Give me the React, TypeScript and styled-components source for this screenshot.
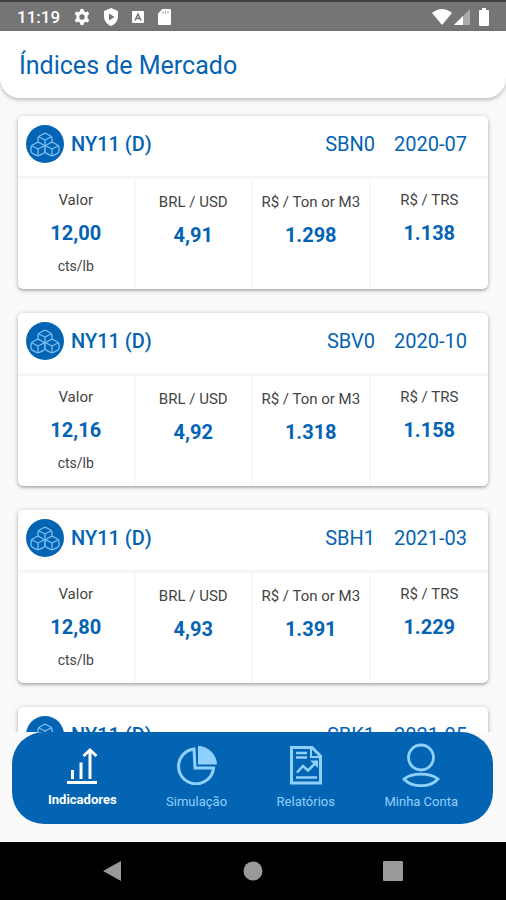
import React from "react";
import styled, { createGlobalStyle } from "styled-components";

const BLUE = "#0464b4";
const LIGHT = "#90d0fc";

const GlobalStyle = createGlobalStyle`
  * { box-sizing: border-box; }
  body { margin: 0; background: #fafafa; font-family: Roboto, "Liberation Sans", sans-serif; }
  button { font: inherit; border: 0; padding: 0; background: none; cursor: pointer; }
  h1, h2, p, dl, dt, dd { margin: 0; font-weight: 400; }
`;

const Screen = styled.div`
  height: 100vh;
  display: flex;
  flex-direction: column;
  background: #fafafa;
`;

const StatusBar = styled.div`
  flex: none;
  height: 31px;
  padding: 0 15px 0 17px;
  border-top: 2px solid #404040;
  background: #757575;
  color: #fff;
  display: flex;
  align-items: center;
  justify-content: space-between;
`;

const StatusGroup = styled.div<{ $gap: number }>`
  display: flex;
  align-items: center;
  gap: ${(p) => p.$gap}px;
  svg { display: block; }
`;

const Clock = styled.span`
  font-size: 17px;
  line-height: 20px;
  font-weight: 500;
`;

const Header = styled.header`
  flex: none;
  position: relative;
  height: 67px;
  padding: 0 19px;
  display: flex;
  align-items: center;
  background: #fff;
  border-radius: 0 0 20px 20px;
  box-shadow: 0 2px 4px rgba(0, 0, 0, 0.25);
`;

const Title = styled.h1`
  padding-top: 3px;
  font-size: 25px;
  line-height: 32px;
  color: ${BLUE};
`;

const List = styled.main`
  flex: 1;
  min-height: 0;
  overflow: hidden;
  padding: 18px 18px 0;
  display: flex;
  flex-direction: column;
  gap: 24px;
`;

const Card = styled.article`
  flex: none;
  background: #fff;
  border-radius: 5px;
  box-shadow: 0 1px 5px rgba(0, 0, 0, 0.28), 0 2px 2px rgba(0, 0, 0, 0.12);
`;

const CardHeader = styled.div`
  height: 63px;
  padding: 0 21px 5px 8px;
  display: flex;
  align-items: center;
  border-bottom: 3px solid #f6f6f6;
  color: ${BLUE};
  font-size: 20px;
  line-height: 24px;
  svg { display: block; margin-right: 7px; }
`;

const CardTitle = styled.h2`
  flex: 1;
  font-size: 20px;
  font-weight: 500;
`;

const Period = styled.span`
  margin-left: 19px;
`;

const Metrics = styled.dl`
  display: grid;
  grid-template-columns: repeat(4, 1fr);
  height: 110px;
`;

const Metric = styled.div<{ $inner: boolean }>`
  padding-top: ${(p) => (p.$inner ? 14 : 12)}px;
  text-align: center;
  border-right: 2px solid #f8f8f8;
  &:last-child { border-right: 0; }
`;

const MetricLabel = styled.dt`
  font-size: 15px;
  line-height: 18px;
  color: #444;
  white-space: nowrap;
`;

const MetricValue = styled.dd`
  margin-top: 12px;
  font-size: 20px;
  line-height: 24px;
  font-weight: 700;
  color: ${BLUE};
`;

const MetricUnit = styled.dd`
  margin-top: 12px;
  font-size: 14px;
  line-height: 18px;
  color: #444;
`;

const TabArea = styled.div`
  flex: none;
  padding: 0 13px 18px 12px;
`;

const TabBar = styled.nav`
  height: 92px;
  padding: 12px 35px 0 36px;
  border-radius: 32px;
  background: ${BLUE};
  display: flex;
  justify-content: space-between;
  align-items: flex-start;
`;

const Tab = styled.button<{ $active: boolean }>`
  display: flex;
  flex-direction: column;
  align-items: center;
  gap: ${(p) => (p.$active ? 5 : 7)}px;
  color: ${(p) => (p.$active ? "#fff" : LIGHT)};
  font-size: 13px;
  line-height: 18px;
  font-weight: ${(p) => (p.$active ? 700 : 400)};
  svg { display: block; }
`;

const SystemBar = styled.div`
  flex: none;
  height: 58px;
  background: #000;
  display: flex;
  align-items: center;
  justify-content: center;
  gap: 116px;
`;

const SystemButton = styled.button`
  width: 24px;
  height: 24px;
  svg { display: block; }
`;

const SugarIcon = () => (
  <svg width="38" height="38" viewBox="0 0 38 38" fill="none" stroke="#7cc0f4" strokeWidth="1.3" strokeLinejoin="round">
    <circle cx="19" cy="19" r="19" fill={BLUE} stroke="none" />
    {[[19, 15], [12, 24], [26, 24]].map(([x, y]) => (
      <g key={x} transform={`translate(${x} ${y})`}>
        <path d="M-1.500-6.300Q0-7 1.500-6.300L5.500-4Q7-3 7-1.500V2Q7 3.500 5.500 4.300L1.500 6.300Q0 7-1.500 6.300L-5.500 4.300Q-7 3.500-7 2V-1.500Q-7-3-5.500-4Z" fill={BLUE} />
        <path d="M-6-3 0 0 6-3M0 0V6.500" />
      </g>
    ))}
  </svg>
);

const IndicatorsIcon = () => (
  <svg width="32" height="40" viewBox="0 0 32 40" fill="none" stroke="#fff" strokeWidth="3">
    <path d="M1 37.500H31M6.500 34V25M15 34V17.500M24 34V6" />
    <path d="M17.500 11 24 5 30.500 11" />
  </svg>
);

const PieIcon = () => (
  <svg width="42" height="40" viewBox="0 0 42 40">
    <path d="M18 4A17.500 17.500 0 1 0 37.500 23H19Z" fill="none" stroke={LIGHT} strokeWidth="3" />
    <path d="M22 1A19 19 0 0 1 41 19.500H22Z" fill={LIGHT} />
  </svg>
);

const ReportIcon = () => (
  <svg width="34" height="40" viewBox="0 0 34 40" fill="none" stroke={LIGHT} strokeWidth="3">
    <path d="M2.500 2.500H23L31.500 11V38H2.500Z" />
    <path d="M22 3V12H31" strokeWidth="2" />
    <path d="M7 8H18M7 12.500H18M7 32.500H28" strokeWidth="2.500" />
    <path d="M8 27.500 14 21 19 25.500 27 17.500" strokeWidth="2.500" />
    <path d="M21 15.500H29V23Z" fill={LIGHT} stroke="none" />
  </svg>
);

const AccountIcon = () => (
  <svg width="38" height="44" viewBox="0 0 38 44" fill="none" stroke={LIGHT} strokeWidth="2.800">
    <circle cx="19" cy="14.500" r="12.500" />
    <path d="M2 36C10 29.500 28 29.500 36 36C28 45 10 45 2 36Z" />
  </svg>
);

const TabIconSlot = styled.span`
  height: 42px;
  display: flex;
  align-items: center;
`;

const cards = [
  { code: "SBN0", period: "2020-07", values: ["12,00", "4,91", "1.298", "1.138"] },
  { code: "SBV0", period: "2020-10", values: ["12,16", "4,92", "1.318", "1.158"] },
  { code: "SBH1", period: "2021-03", values: ["12,80", "4,93", "1.391", "1.229"] },
  { code: "SBK1", period: "2021-05", values: [] },
];

const labels = ["Valor", "BRL / USD", "R$ / Ton or M3", "R$ / TRS"];

const tabs = [
  { label: "Indicadores", Icon: IndicatorsIcon },
  { label: "Simulação", Icon: PieIcon },
  { label: "Relatórios", Icon: ReportIcon },
  { label: "Minha Conta", Icon: AccountIcon },
];

export default function App() {
  return (
    <Screen>
      <GlobalStyle />
      <StatusBar>
        <StatusGroup $gap={14}>
          <Clock>11:19</Clock>
          <svg width="16" height="16" viewBox="0 0 16 16">
            <path fill="#fff" fillRule="evenodd" d="M6.500 0h3l.5 2.300 1.500.9 2.300-.8 1.500 2.600-1.700 1.600v2.800l1.700 1.600-1.500 2.600-2.300-.8-1.500.9-.5 2.300h-3L6 13.700l-1.500-.9-2.300.8L.7 11l1.700-1.600V6.600L.7 5l1.500-2.600 2.300.8L6 2.300ZM8 5.300a2.700 2.700 0 1 0 0 5.400 2.700 2.700 0 0 0 0-5.400Z" />
          </svg>
          <svg width="14" height="18" viewBox="0 0 14 18">
            <path fill="#fff" d="M7 0 14 3V8C14 13 11 16.500 7 18 3 16.500 0 13 0 8V3Z" />
            <path fill="#757575" d="M5 5.500 10.500 9 5 12.500Z" />
          </svg>
          <svg width="12" height="14" viewBox="0 0 12 14">
            <rect y="1" width="12" height="12" rx="1" fill="#fff" />
            <path d="M3 10.500 6 4 9 10.500M4 8.500H8" fill="none" stroke="#757575" strokeWidth="1.500" />
          </svg>
          <svg width="13" height="16" viewBox="0 0 13 16">
            <path fill="#fff" d="M4.500 0H12a1 1 0 0 1 1 1V15a1 1 0 0 1-1 1H1a1 1 0 0 1-1-1V4.500Z" />
            <path d="M5 2V5M7.500 2V5M10 2V5" stroke="#aaa" />
          </svg>
        </StatusGroup>
        <StatusGroup $gap={2}>
          <svg width="20" height="16" viewBox="0 0 20 16">
            <path fill="#fff" d="M0 4Q10-4 20 4L10 16Z" />
          </svg>
          <svg width="18" height="16" viewBox="0 0 18 16">
            <path fill="#aaa" d="M16 0V16H0Z" />
            <path fill="#fff" d="M9 7V16H0Z" />
          </svg>
          <svg width="17" height="18" viewBox="0 0 17 18">
            <path fill="#fff" d="M8 0h4v2h2q1 0 1 1v14q0 1-1 1H6q-1 0-1-1V3q0-1 1-1h2Z" />
          </svg>
        </StatusGroup>
      </StatusBar>
      <Header>
        <Title>Índices de Mercado</Title>
      </Header>
      <List>
        {cards.map((card) => (
          <Card key={card.code}>
            <CardHeader>
              <SugarIcon />
              <CardTitle>NY11 (D)</CardTitle>
              <span>{card.code}</span>
              <Period>{card.period}</Period>
            </CardHeader>
            {card.values.length > 0 && (
              <Metrics>
                {labels.map((label, i) => (
                  <Metric key={label} $inner={i === 1 || i === 2}>
                    <MetricLabel>{label}</MetricLabel>
                    <MetricValue>{card.values[i]}</MetricValue>
                    {i === 0 && <MetricUnit>cts/lb</MetricUnit>}
                  </Metric>
                ))}
              </Metrics>
            )}
          </Card>
        ))}
      </List>
      <TabArea>
        <TabBar>
          {tabs.map(({ label, Icon }, i) => (
            <Tab key={label} type="button" $active={i === 0}>
              <TabIconSlot><Icon /></TabIconSlot>
              {label}
            </Tab>
          ))}
        </TabBar>
      </TabArea>
      <SystemBar>
        <SystemButton type="button" aria-label="Voltar">
          <svg width="24" height="24" viewBox="0 0 24 24"><path d="M2 12 20 2V22Z" fill="#999" /></svg>
        </SystemButton>
        <SystemButton type="button" aria-label="Início">
          <svg width="24" height="24" viewBox="0 0 24 24"><circle cx="12" cy="12" r="9.500" fill="#999" /></svg>
        </SystemButton>
        <SystemButton type="button" aria-label="Recentes">
          <svg width="24" height="24" viewBox="0 0 24 24"><rect x="2" y="2" width="20" height="20" rx="1" fill="#999" /></svg>
        </SystemButton>
      </SystemBar>
    </Screen>
  );
}
